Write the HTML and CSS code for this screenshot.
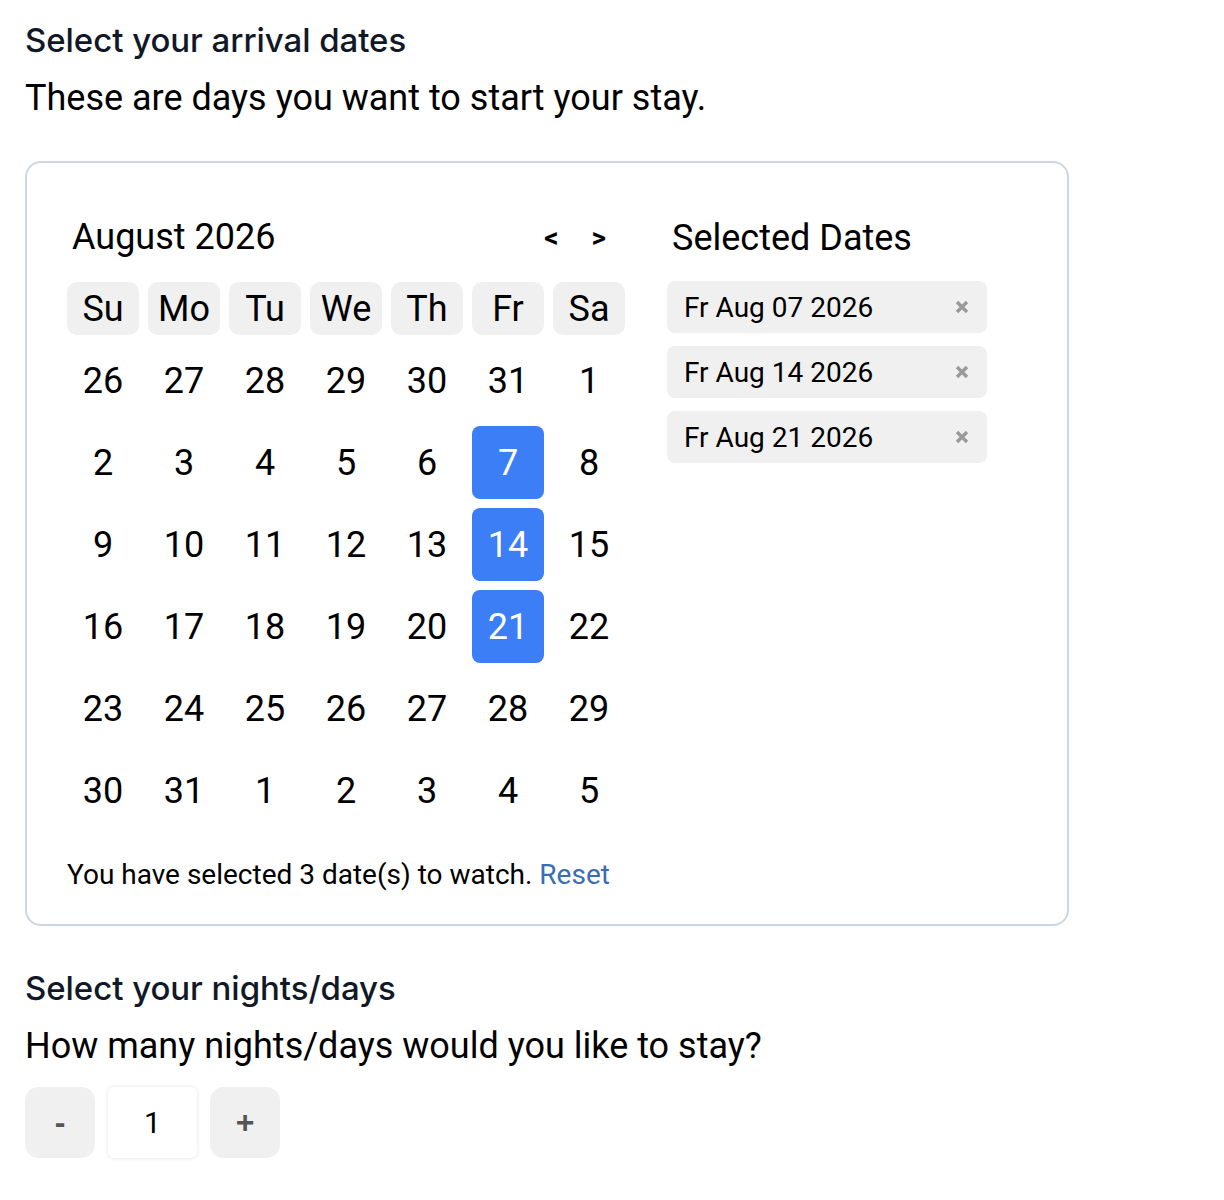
FILE: index.html
```html
<!DOCTYPE html>
<html lang="en">
<head>
<meta charset="utf-8">
<title>Select dates</title>
<link rel="stylesheet" href="styles.css">
</head>
<body>
<main class="page">
  <h2 class="section-title">Select your arrival dates</h2>
  <p class="section-sub">These are days you want to start your stay.</p>

  <section class="picker">
    <div class="cal">
      <div class="cal-head">
        <div class="month">August 2026</div>
        <div class="nav"><span class="nav-btn">&lt;</span><span class="nav-btn">&gt;</span></div>
      </div>
      <div class="grid">
        <div class="wd">Su</div><div class="wd">Mo</div><div class="wd">Tu</div><div class="wd">We</div><div class="wd">Th</div><div class="wd">Fr</div><div class="wd">Sa</div>
        <div class="day">26</div><div class="day">27</div><div class="day">28</div><div class="day">29</div><div class="day">30</div><div class="day">31</div><div class="day">1</div>
        <div class="day">2</div><div class="day">3</div><div class="day">4</div><div class="day">5</div><div class="day">6</div><div class="day sel">7</div><div class="day">8</div>
        <div class="day">9</div><div class="day">10</div><div class="day">11</div><div class="day">12</div><div class="day">13</div><div class="day sel">14</div><div class="day">15</div>
        <div class="day">16</div><div class="day">17</div><div class="day">18</div><div class="day">19</div><div class="day">20</div><div class="day sel">21</div><div class="day">22</div>
        <div class="day">23</div><div class="day">24</div><div class="day">25</div><div class="day">26</div><div class="day">27</div><div class="day">28</div><div class="day">29</div>
        <div class="day">30</div><div class="day">31</div><div class="day">1</div><div class="day">2</div><div class="day">3</div><div class="day">4</div><div class="day">5</div>
      </div>
      <p class="summary">You have selected 3 date(s) to watch. <a class="reset" href="#">Reset</a></p>
    </div>

    <div class="selected">
      <div class="sel-head">Selected Dates</div>
      <ul class="chips">
        <li class="chip"><span>Fr Aug 07 2026</span><span class="x"><svg viewBox="0 0 16 16" width="16" height="16"><path d="M3 3L13 13M13 3L3 13" stroke="#9a9a9a" stroke-width="3.4"/></svg></span></li>
        <li class="chip"><span>Fr Aug 14 2026</span><span class="x"><svg viewBox="0 0 16 16" width="16" height="16"><path d="M3 3L13 13M13 3L3 13" stroke="#9a9a9a" stroke-width="3.4"/></svg></span></li>
        <li class="chip"><span>Fr Aug 21 2026</span><span class="x"><svg viewBox="0 0 16 16" width="16" height="16"><path d="M3 3L13 13M13 3L3 13" stroke="#9a9a9a" stroke-width="3.4"/></svg></span></li>
      </ul>
    </div>
  </section>

  <h2 class="section-title second">Select your nights/days</h2>
  <p class="section-sub">How many nights/days would you like to stay?</p>

  <div class="stepper">
    <button class="step-btn minus" type="button">-</button>
    <div class="step-val">1</div>
    <button class="step-btn plus" type="button">+</button>
  </div>
</main>
</body>
</html>
```

FILE: styles.css
```css
* { box-sizing: border-box; }
html, body { margin: 0; padding: 0; background: #fff; }
body { font-family: Roboto, "Liberation Sans", Arial, sans-serif; color: #000; }

.page { padding: 22px 25px 40px 25px; }

.section-title {
  margin: 0;
  font-family: Inter, Roboto, "Liberation Sans", sans-serif;
  font-weight: 500;
  font-size: 33px;
  line-height: 36px;
  color: #111827;
  letter-spacing: -0.05px;
}
.section-sub {
  margin: 20px 0 0 0;
  font-size: 36px;
  line-height: 40px;
  color: #000;
}
.section-title.second { margin-top: 44px; }

.picker {
  margin-top: 43px;
  width: 1044px;
  height: 765px;
  border: 2px solid #cdd6e2;
  border-radius: 16px;
  padding: 40px 40px 32px 40px;
  display: flex;
  gap: 42px;
}

.cal { width: 558px; display: flex; flex-direction: column; }
.cal-head {
  height: 70px;
  display: flex;
  align-items: center;
  justify-content: space-between;
  padding-left: 5px;
  padding-right: 19px;
}
.month { font-size: 36px; }
.nav { display: flex; gap: 33px; font-weight: 700; font-size: 28px; }
.nav-btn { display: inline-block; }

.grid {
  margin-top: 11px;
  display: grid;
  grid-template-columns: repeat(7, 72px);
  grid-template-rows: 53px repeat(6, 73px);
  column-gap: 9px;
  row-gap: 9px;
}
.wd, .day {
  display: flex;
  align-items: center;
  justify-content: center;
  font-size: 36px;
}
.wd { background: #f0f0f0; border-radius: 10px; }
.day.sel { background: #3b7ef6; color: #fff; border-radius: 8px; }

.summary {
  margin: 31px 0 0 0;
  font-size: 28px;
  line-height: 34px;
}
.reset { color: #3a6db5; text-decoration: none; }

.selected { width: 320px; }
.sel-head {
  height: 70px;
  display: flex;
  align-items: center;
  padding-left: 5px;
  font-size: 36px;
}
.chips { list-style: none; margin: 8px 0 0 0; padding: 0; display: flex; flex-direction: column; gap: 13px; }
.chip {
  height: 52px;
  background: #f0f0f0;
  border-radius: 8px;
  display: flex;
  align-items: center;
  justify-content: space-between;
  padding: 0 17px 0 17px;
  font-size: 28px;
}
.x { display: flex; align-items: center; }

.stepper { margin-top: 21px; display: flex; gap: 13px; align-items: stretch; }
.step-btn {
  width: 70px;
  height: 71px;
  border: none;
  border-radius: 14px;
  background: #f0f0f0;
  color: #555;
  font-family: "Liberation Sans", Arial, sans-serif;
  font-weight: 700;
  font-size: 32px;
  padding: 0;
}
.step-val {
  width: 89px;
  height: 71px;
  border-radius: 6px;
  background: #fff;
  box-shadow: 0 0 4px rgba(0,0,0,0.12);
  display: flex;
  align-items: center;
  justify-content: center;
  font-size: 30px;
}
```
